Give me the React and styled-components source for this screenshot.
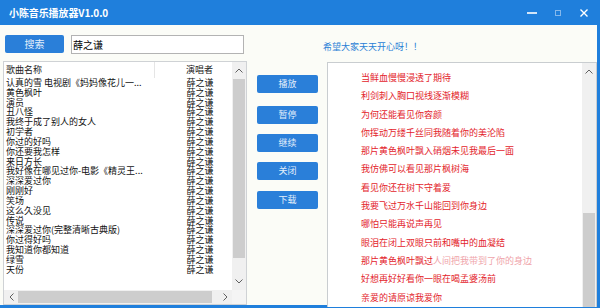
import React from 'react';
import styled, { createGlobalStyle } from 'styled-components';

const Global = createGlobalStyle`
  html, body { margin: 0; padding: 0; }
  body {
    width: 600px; height: 308px; overflow: hidden; background: #fbfcf7;
    font-family: "Noto Sans CJK SC", "Noto Sans", sans-serif;
  }
`;

const BLUE = '#1f7fdc';

const Window = styled.div`
  width: 600px; height: 308px; display: flex; flex-direction: column; overflow: hidden;
`;
const TitleBar = styled.div`
  height: 25px; flex: none; background: ${BLUE}; color: #fff;
  display: flex; align-items: center; padding-left: 9px; box-sizing: border-box;
`;
const Title = styled.div`
  font-size: 10px; font-weight: 700; line-height: 1; margin-top: 1px; letter-spacing: -0.1px;
`;
const Controls = styled.div`
  margin-left: auto; display: flex; align-items: center; padding-right: 3px;
`;
const Ctrl = styled.div`
  width: 26px; height: 25px; display: flex; align-items: center; justify-content: center;
`;
const Body = styled.div`
  flex: 1; min-height: 0; display: flex; flex-direction: column;
  background: #fbfcf7; border-right: 3px solid ${BLUE}; border-bottom: 3px solid ${BLUE};
`;
const TopBar = styled.div`
  height: 36px; flex: none; box-sizing: border-box; padding: 10px 0 0 5px;
  display: flex; align-items: flex-start;
`;
const BlueButton = styled.button`
  width: ${p => p.$w}px; height: 18px; margin: ${p => p.$mt || 0}px 0 0 0; padding: 0;
  border: none; border-radius: 2px; background: #2a7fd9; color: #e2eefb;
  font-family: inherit; font-size: ${p => p.$fs}px; line-height: 18px; flex: none;
`;
const SearchInput = styled.input`
  margin-left: 7px; width: 173px; height: 19px; box-sizing: border-box;
  border: 1px solid #b3b3b3; background: #fff; padding: 0 0 0 1px;
  font-family: inherit; font-size: 10px; color: #000; outline: none;
`;
const Message = styled.div`
  margin: 3px 0 0 79px; font-size: 9px; line-height: 18px; color: #2a7fd6;
`;
const Main = styled.div`
  flex: 1; min-height: 0; display: flex; padding-left: 3px;
`;
const ListView = styled.div`
  width: 244px; flex: none; box-sizing: border-box; border: 1px solid #cfd2d5;
  background: #fff; display: flex; flex-direction: column;
`;
const ListBody = styled.div`
  height: 228px; flex: none; display: flex;
`;
const ListContent = styled.div`
  flex: 1; min-width: 0; overflow: hidden;
`;
const Grid = styled.div`
  display: grid; grid-template-columns: 151px 90px; width: 241px;
`;
const HeadCell = styled.div`
  height: 16px; line-height: 16px; font-size: 9px; color: #222;
  padding-left: ${p => (p.$center ? 0 : 2)}px; text-align: ${p => (p.$center ? 'center' : 'left')};
  border-right: 1px solid #e5e5e5; box-sizing: border-box;
`;
const Cell = styled.div`
  height: 9.83px; line-height: 9.83px; font-size: 9px; color: #111; white-space: nowrap;
  padding-left: ${p => (p.$center ? 0 : 2)}px;
  text-align: ${p => (p.$center ? 'center' : 'left')};
`;
const VScroll = styled.div`
  width: 14px; flex: none; background: #f0f0f0; display: flex; flex-direction: column;
`;
const Arrow = styled.div`
  height: ${p => p.$h || 17}px; width: ${p => p.$w || 14}px; flex: none;
  display: flex; align-items: center; justify-content: center;
`;
const Thumb = styled.div`
  background: #cdcdcd; flex: ${p => (p.$fill ? 1 : 'none')};
  height: ${p => (p.$h ? `${p.$h}px` : 'auto')};
  width: ${p => (p.$w ? `${p.$w}px` : 'auto')};
  margin: ${p => p.$m || '0'};
`;
const Spacer = styled.div`
  flex: ${p => (p.$h ? 'none' : 1)}; height: ${p => (p.$h ? `${p.$h}px` : 'auto')};
`;
const HScrollRow = styled.div`
  height: 14px; flex: none; display: flex;
`;
const HScroll = styled.div`
  flex: 1; background: #f0f0f0; display: flex; align-items: stretch;
`;
const Corner = styled.div`
  width: 14px; flex: none; background: #f4f4f4;
`;
const ButtonCol = styled.div`
  width: 80px; flex: none; box-sizing: border-box; padding: 14px 0 0 10px;
  display: flex; flex-direction: column;
`;
const LyricsBox = styled.div`
  width: 270px; flex: none; box-sizing: border-box; margin-top: 1px; height: 245px;
  border: 1px solid #c9cdd0; border-bottom: none; background: #fff; display: flex; overflow: hidden;
`;
const Lyrics = styled.div`
  flex: 1; padding: 6px 0 0 33px;
`;
const Line = styled.div`
  font-size: 9px; line-height: 18.3px; color: #e3242c; white-space: nowrap;
`;
const Faded = styled.span`
  color: #efa4aa;
`;

const Up = () => (
  <svg width="8" height="5" viewBox="0 0 8 5"><polyline points="0.5,4.5 4,1 7.5,4.5" fill="none" stroke="#606060" strokeWidth="1" /></svg>
);
const Down = () => (
  <svg width="8" height="5" viewBox="0 0 8 5"><polyline points="0.5,0.5 4,4 7.5,0.5" fill="none" stroke="#606060" strokeWidth="1" /></svg>
);
const Left = () => (
  <svg width="5" height="8" viewBox="0 0 5 8"><polyline points="4.5,0.5 1,4 4.5,7.5" fill="none" stroke="#606060" strokeWidth="1" /></svg>
);
const Right = () => (
  <svg width="5" height="8" viewBox="0 0 5 8"><polyline points="0.5,0.5 4,4 0.5,7.5" fill="none" stroke="#606060" strokeWidth="1" /></svg>
);

const songs = [
  '认真的雪 电视剧《妈妈像花儿一...',
  '黄色枫叶', '演员', '丑八怪', '我终于成了别人的女人', '初学者', '你过的好吗', '你还要我怎样',
  '来日方长', '我好像在哪见过你-电影《精灵王...', '深深爱过你', '刚刚好', '笑场', '这么久没见',
  '传说', '深深爱过你(完整清晰古典版)', '你过得好吗', '我知道你都知道', '绿雪', '天份',
];

const buttons = [
  { label: '播放', mt: 0 }, { label: '暂停', mt: 13 }, { label: '继续', mt: 10 },
  { label: '关闭', mt: 10 }, { label: '下载', mt: 11 },
];

const lyrics = [
  '当鲜血慢慢浸透了期待', '利剑刺入胸口视线逐渐模糊', '为何还能看见你容颜',
  '你挥动万缕千丝同我随着你的美沦陷', '那片黄色枫叶飘入硝烟未见我最后一面',
  '我仿佛可以看见那片枫树海', '看见你还在树下守着爱', '我要飞过万水千山能回到你身边',
  '哪怕只能再说声再见', '眼泪在闭上双眼只前和嘴中的血凝结',
];

export default function App() {
  return (
    <Window>
      <Global />
      <TitleBar>
        <Title>小陈音乐播放器V1.0.0</Title>
        <Controls>
          <Ctrl>
            <svg width="10" height="4" viewBox="0 0 10 4"><line x1="0" y1="2" x2="10" y2="2" stroke="#fff" strokeWidth="1.6" /></svg>
          </Ctrl>
          <Ctrl>
            <svg width="6" height="6" viewBox="0 0 6 6"><rect x="0.5" y="0.5" width="5" height="5" fill="none" stroke="rgba(255,255,255,0.45)" strokeWidth="1" /></svg>
          </Ctrl>
          <Ctrl>
            <svg width="8" height="8" viewBox="0 0 8 8"><path d="M0.5 0.5L7.5 7.5M7.5 0.5L0.5 7.5" stroke="#fff" strokeWidth="1.4" /></svg>
          </Ctrl>
        </Controls>
      </TitleBar>
      <Body>
        <TopBar>
          <BlueButton $w={59} $fs={10}>搜索</BlueButton>
          <SearchInput defaultValue="薛之谦" />
          <Message>希望大家天天开心呀！！</Message>
        </TopBar>
        <Main>
          <ListView>
            <ListBody>
              <ListContent>
                <Grid>
                  <HeadCell>歌曲名称</HeadCell>
                  <HeadCell $center>演唱者</HeadCell>
                  {songs.map((s, i) => (
                    <React.Fragment key={i}>
                      <Cell>{s}</Cell>
                      <Cell $center>薛之谦</Cell>
                    </React.Fragment>
                  ))}
                </Grid>
              </ListContent>
              <VScroll>
                <Arrow><Up /></Arrow>
                <Thumb $h={179} $m="0 1px" />
                <Spacer />
                <Arrow><Down /></Arrow>
              </VScroll>
            </ListBody>
            <HScrollRow>
              <HScroll>
                <Arrow $h={14}><Left /></Arrow>
                <Thumb $w={194} $m="1px 0" />
                <Spacer />
                <Arrow $h={14}><Right /></Arrow>
              </HScroll>
              <Corner />
            </HScrollRow>
          </ListView>
          <ButtonCol>
            {buttons.map(b => (
              <BlueButton key={b.label} $w={61} $fs={9} $mt={b.mt}>{b.label}</BlueButton>
            ))}
          </ButtonCol>
          <LyricsBox>
            <Lyrics>
              {lyrics.map((l, i) => <Line key={i}>{l}</Line>)}
              <Line>那片黄色枫叶飘过<Faded>人间把我带到了你的身边</Faded></Line>
              <Line>好想再好好看你一眼在喝孟婆汤前</Line>
              <Line>亲爱的请原谅我爱你</Line>
            </Lyrics>
            <VScroll>
              <Arrow><Up /></Arrow>
              <Spacer $h={133} />
              <Thumb $fill $m="0 1px" />
            </VScroll>
          </LyricsBox>
        </Main>
      </Body>
    </Window>
  );
}
